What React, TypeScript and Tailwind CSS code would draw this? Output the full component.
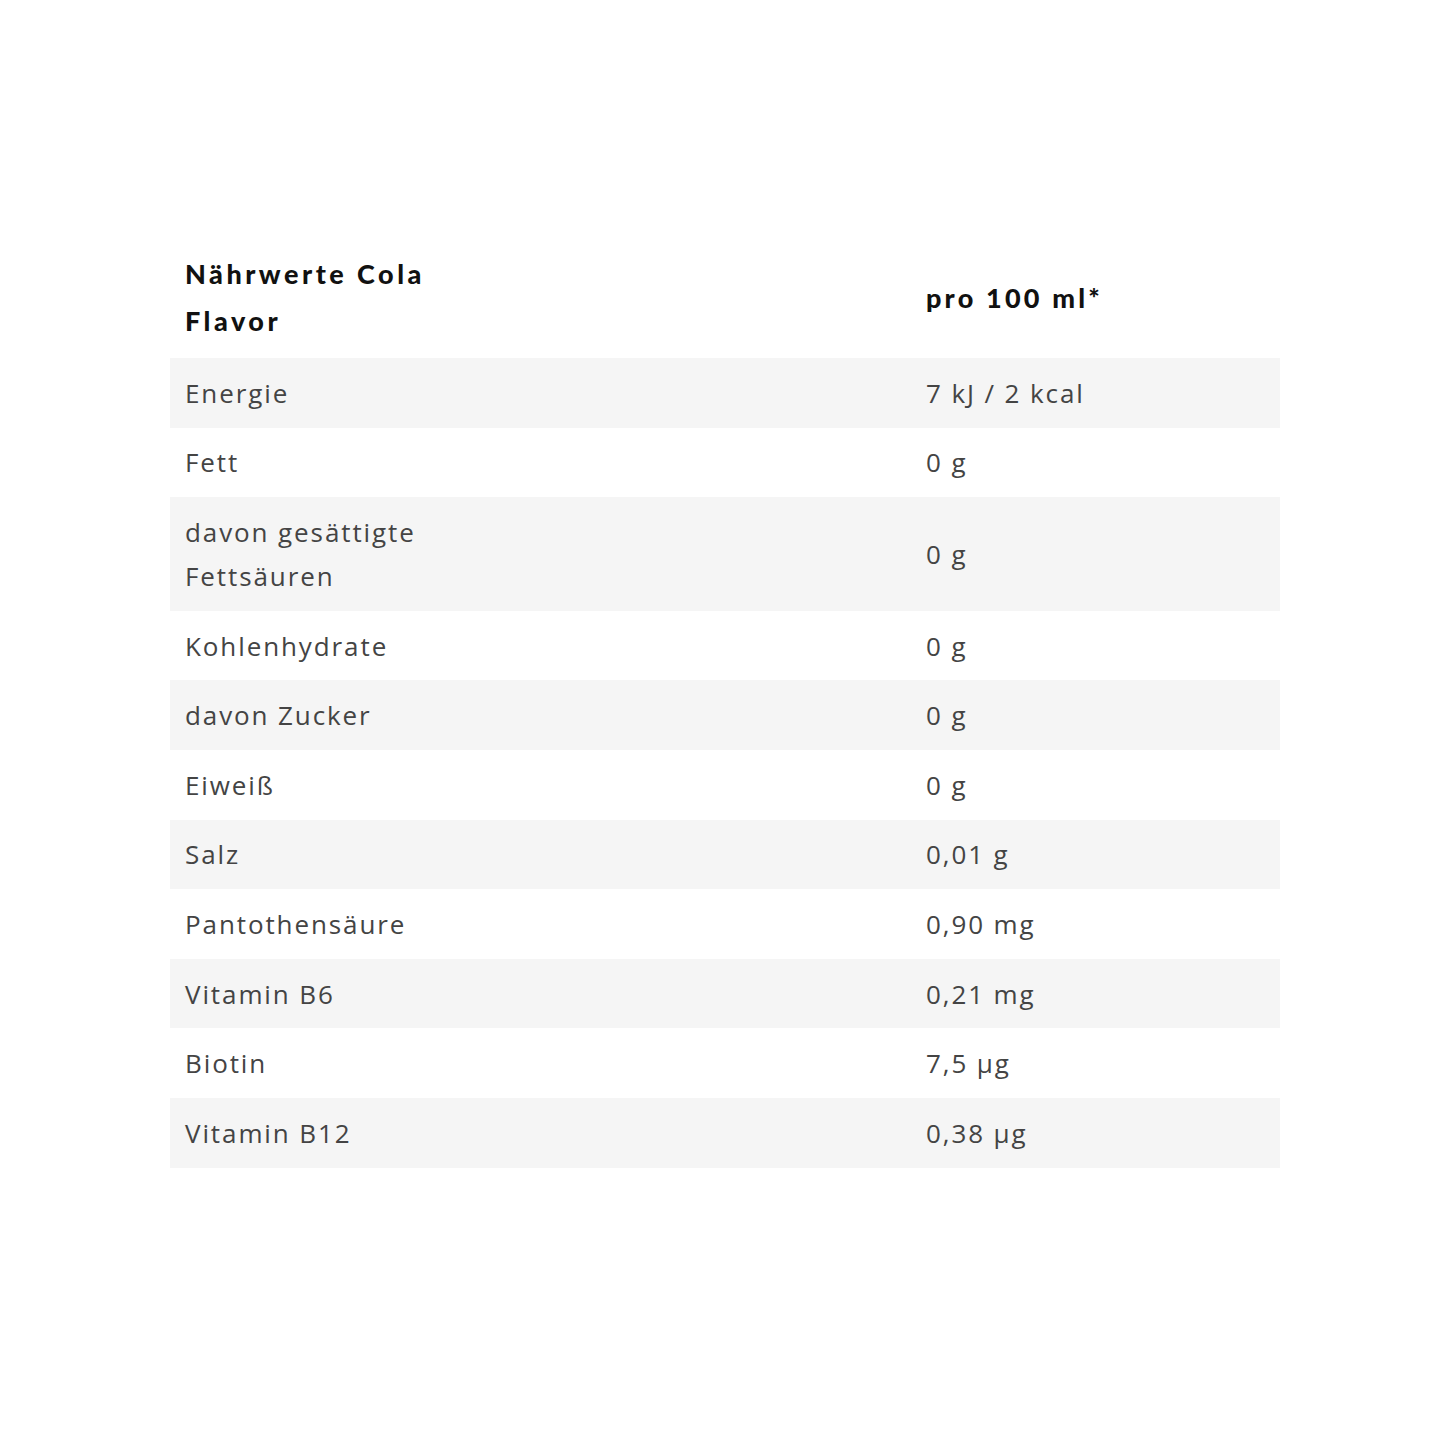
import React from 'react'

const rows: [string, string][] = [
  ['Energie', '7 kJ / 2 kcal'],
  ['Fett', '0 g'],
  ['davon gesättigte Fettsäuren', '0 g'],
  ['Kohlenhydrate', '0 g'],
  ['davon Zucker', '0 g'],
  ['Eiweiß', '0 g'],
  ['Salz', '0,01 g'],
  ['Pantothensäure', '0,90 mg'],
  ['Vitamin B6', '0,21 mg'],
  ['Biotin', '7,5 µg'],
  ['Vitamin B12', '0,38 µg'],
]

export default function App() {
  return (
    <div className="min-h-[1445px] w-[1445px] bg-white pt-[250px]">
      <table className="ml-[170px] w-[1110px] border-collapse">
        <thead>
          <tr>
            <th className="w-[756px] px-[15px] pb-[14px] text-left align-middle font-['Lato',sans-serif] text-[27px] font-black leading-[47px] tracking-[3.5px] text-[#111]">
              <div className="w-[290px]">Nährwerte Cola Flavor</div>
            </th>
            <th className="px-0 pb-[14px] text-left align-middle font-['Lato',sans-serif] text-[27px] font-black leading-[47px] tracking-[3.2px] text-[#111]">
              pro 100 ml*
            </th>
          </tr>
        </thead>
        <tbody className="font-['Open_Sans',sans-serif]">
          {rows.map(([name, value], i) => (
            <tr key={name} className={i % 2 === 0 ? 'bg-[#f5f5f5]' : 'bg-white'}>
              <td className="px-[15px] py-[12.8px] align-middle text-[26px] leading-[44px] tracking-[1.9px] text-[#444]">
                <div className="w-[300px]">{name}</div>
              </td>
              <td className="py-[12.8px] align-middle text-[26px] leading-[44px] tracking-[1.9px] text-[#444]">
                {value}
              </td>
            </tr>
          ))}
        </tbody>
      </table>
    </div>
  )
}
